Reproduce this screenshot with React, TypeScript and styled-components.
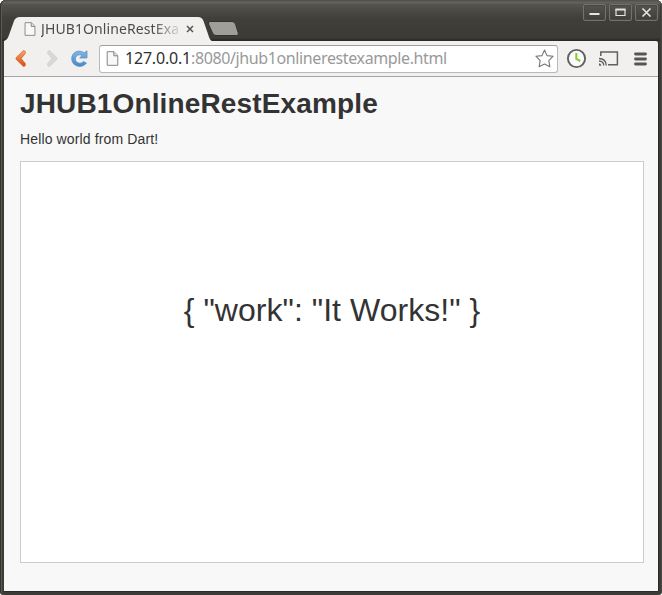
import React from "react";
import styled, { createGlobalStyle } from "styled-components";

const GlobalStyle = createGlobalStyle`
  html, body { margin: 0; padding: 0; background: #fff; }
  body { overflow: hidden; }
  * { box-sizing: border-box; }
`;

const Window = styled.div`
  width: 662px;
  height: 595px;
  display: flex;
  flex-direction: column;
  padding: 0 4px 4px;
  border-radius: 6px 6px 4px 4px;
  background: #3c3b37;
  box-shadow: inset 1px 0 #33322e, inset 2px 0 #5b5a54, inset -1px 0 #4a4944, inset 0 1px #55544f, inset 0 2px #74736c;
  font-family: "Liberation Sans", Arial, sans-serif;
`;

const TitleBar = styled.header`
  height: 41px;
  flex: none;
  display: flex;
  align-items: flex-end;
  margin: 0 -2px;
  padding: 0 2px;
  border-radius: 5px 5px 0 0;
  background: linear-gradient(#504f4a 0, #66655e 3px, #55544d 4px, #403f3a 18px, #3c3b37 38px, #2b2a27 40px);
`;

const Tab = styled.div`
  position: relative;
  width: 208px;
  height: 24px;
  display: flex;
  align-items: center;
  padding-left: 20px;
`;

const TabShape = styled.svg`
  position: absolute;
  inset: 0;
`;

const TabTitle = styled.span`
  position: relative;
  width: 139px;
  margin-left: 5px;
  overflow: hidden;
  white-space: nowrap;
  font: 14px/22px "Noto Sans", sans-serif;
  letter-spacing: 0.1px;
  color: #4c4c4c;
  mask-image: linear-gradient(to right, #000 112px, transparent 142px);
`;

const Glyph = styled.svg`
  position: relative;
  display: block;
  flex: none;
`;

const TabClose = styled(Glyph)`
  margin-left: 6px;
`;

const NewTab = styled.svg`
  display: block;
  margin: 0 0 4px -6px;
`;

const Controls = styled.div`
  display: flex;
  gap: 3px;
  align-self: flex-start;
  margin: 4px 0 0 auto;
`;

const ControlButton = styled.button`
  width: 23px;
  height: 17px;
  padding: 0;
  border: 1px solid #73726c;
  border-radius: 2px;
  background: linear-gradient(#55544f, #3f3e3a);
  box-shadow: inset 0 0 0 1px #494843;
  display: grid;
  place-items: center;
`;

const Toolbar = styled.nav`
  height: 36px;
  flex: none;
  display: flex;
  align-items: center;
  background: #f1f0ef;
  border-bottom: 1px solid #a5a5a5;
  border-top-right-radius: 2px;
  box-shadow: 1px 0 #2b2a27;
`;

const NavButtons = styled.div`
  width: 95px;
  flex: none;
  display: flex;
  align-items: center;
  padding-left: 11px;
`;

const ForwardGlyph = styled(Glyph)`
  margin-left: 21px;
`;

const ReloadGlyph = styled(Glyph)`
  margin-left: 13px;
`;

const AddressBar = styled.div`
  width: 459px;
  height: 28px;
  flex: none;
  display: flex;
  align-items: center;
  padding: 0 3px 0 6px;
  border: 1px solid #b9b9b9;
  border-top-color: #9f9f9f;
  border-radius: 3px;
  background: #fff;
`;

const Url = styled.span`
  flex: 1;
  margin-left: 6px;
  padding-bottom: 2px;
  white-space: nowrap;
  font: 16px/24px "Noto Sans", sans-serif;
  letter-spacing: -0.38px;
  color: #999;
`;

const Host = styled.span`
  color: #303030;
  letter-spacing: -0.2px;
`;

const Actions = styled.div`
  display: flex;
  align-items: center;
  gap: 12px;
  padding-left: 8px;
`;

const MenuGlyph = styled(Glyph)`
  margin-left: 3px;
`;

const Page = styled.main`
  flex: 1;
  padding: 11px 14px 0 16px;
  background: #f8f8f8;
  box-shadow: 1px 0 #2b2a27, 0 1px #2b2a27;
  color: #333;
`;

const Heading = styled.h1`
  margin: 0;
  font-size: 28px;
  line-height: 32px;
  font-weight: bold;
  letter-spacing: 0.14px;
`;

const Greeting = styled.p`
  margin: 11px 0 14px;
  font-size: 14px;
  line-height: 16px;
  letter-spacing: 0.13px;
`;

const Output = styled.section`
  width: 624px;
  height: 402px;
  display: flex;
  justify-content: center;
  padding-top: 130px;
  border: 1px solid #ccc;
  background: #fff;
  font-size: 32px;
  line-height: 36px;
  letter-spacing: 0.04px;
`;

const PageIcon = ({ size = 13 }: { size?: number }) => (
  <Glyph width={size} height={size + 2} viewBox="0 0 12 15">
    <path d="M.7.7h6.800l3.800 3.900v9.700H.7z" fill="#f8f8f8" stroke="#858585" />
    <path d="M7.300.8v4h4" fill="#ddd" stroke="#858585" />
  </Glyph>
);

const CHEVRON = "M8.200.7Q9.500 0 10.200 1.600L10.500 3.200 6.200 8.500 10.500 13.800 10.200 15.400Q9.500 17 8.200 16.300L1.200 9.500Q.5 8.500 1.200 7.500Z";

export default function App() {
  return (
    <>
      <GlobalStyle />
      <Window>
        <TitleBar>
          <Tab>
            <TabShape width="208" height="24" viewBox="0 0 208 24">
              <path d="M0 24C3 23 4 21 5 18L10 4Q11.500 0 16 0H194Q198 0 199.500 4L204 17Q206 24 208 24Z" fill="#f1f0ef" />
            </TabShape>
            <PageIcon size={12} />
            <TabTitle>JHUB1OnlineRestExample</TabTitle>
            <TabClose width="8" height="8" viewBox="0 0 8 8">
              <path d="M1 1l6 6M7 1L1 7" stroke="#555" strokeWidth="1.500" />
            </TabClose>
          </Tab>
          <NewTab width="34" height="16" viewBox="0 0 34 16">
            <path d="M4 .5H26Q28.500.5 29.500 3L32.300 12Q33 14.500 30.500 14.500H10Q7.500 14.500 6.500 12L2.500 3Q2 .5 4 .5Z" fill="#9f9e9b" stroke="#33322e" />
          </NewTab>
          <Controls>
            <ControlButton aria-label="Minimize">
              <svg width="11" height="9"><path d="M.5 6h10" stroke="#e5e4df" strokeWidth="2" /></svg>
            </ControlButton>
            <ControlButton aria-label="Maximize">
              <svg width="11" height="9"><path d="M1 1.500h9v6H1z" fill="none" stroke="#e5e4df" strokeWidth="1.200" /><path d="M.5 1.500h10" stroke="#e5e4df" strokeWidth="2" /></svg>
            </ControlButton>
            <ControlButton aria-label="Close">
              <svg width="11" height="9"><path d="M1.500.5l8 8M9.500.5l-8 8" stroke="#e5e4df" strokeWidth="1.600" /></svg>
            </ControlButton>
          </Controls>
        </TitleBar>
        <Toolbar>
          <NavButtons>
            <Glyph width="11" height="17" viewBox="0 0 11 17">
              <defs>
                <linearGradient id="back" x2="0" y2="1">
                  <stop stopColor="#f2a96c" />
                  <stop offset="1" stopColor="#df4710" />
                </linearGradient>
              </defs>
              <path d={CHEVRON} fill="url(#back)" stroke="#cf571f" strokeWidth=".6" />
            </Glyph>
            <ForwardGlyph width="11" height="17" viewBox="0 0 11 17">
              <path d={CHEVRON} transform="translate(11 0) scale(-1 1)" fill="#d9d8d7" stroke="#c9c8c7" strokeWidth=".6" />
            </ForwardGlyph>
            <ReloadGlyph width="17" height="17" viewBox="0 0 17 17">
              <defs>
                <linearGradient id="reload" x2="0" y2="1">
                  <stop stopColor="#86b6e2" />
                  <stop offset="1" stopColor="#4789ca" />
                </linearGradient>
              </defs>
              <path
                d="M13.300 2.800 16 .8V8H8.700L10.900 5.400C7.800 3.800 4.300 5.800 4.400 9c.1 4.200 5.500 5.600 8 2.400l3.100 1.600C11.300 19 .8 16.800.7 8.800.6 1.600 8.200-.8 13.300 2.800Z"
                fill="url(#reload)"
                stroke="#4f8dc6"
                strokeWidth=".7"
              />
            </ReloadGlyph>
          </NavButtons>
          <AddressBar>
            <PageIcon />
            <Url><Host>127.0.0.1</Host>:8080/jhub1onlinerestexample.html</Url>
            <Glyph width="19" height="19" viewBox="0 0 19 19">
              <path d="M9.500 1l2.500 5.600 6.100.6-4.300 4.400 1.100 6.200-5.400-2.700-5.400 2.700 1.100-6.200L.9 7.200 7 6.600z" fill="#fff" stroke="#777" strokeWidth="1.100" strokeLinejoin="round" />
            </Glyph>
          </AddressBar>
          <Actions>
            <Glyph width="21" height="21" viewBox="0 0 21 21">
              <circle cx="10.500" cy="10.500" r="8.600" fill="#fafafa" stroke="#606060" strokeWidth="1.900" />
              <path d="M10.300 5v5.800l4 2.200" fill="none" stroke="#8cc832" strokeWidth="2" />
            </Glyph>
            <Glyph width="20" height="17" viewBox="0 0 20 17">
              <path d="M1.800 6V1.900H18.400V14.800H9" fill="none" stroke="#606060" strokeWidth="1.500" />
              <path d="M0 8.500q7 .3 7.300 7M0 11q4.600.2 4.800 4.500" fill="none" stroke="#606060" strokeWidth="1.300" />
              <path d="M0 13.200q2.200.2 2.400 2.500H0z" fill="#606060" />
            </Glyph>
            <MenuGlyph width="13" height="14" viewBox="0 0 13 14">
              <path d="M1.500 2h10M1.500 7h10M1.500 12h10" stroke="#555" strokeWidth="2.800" strokeLinecap="round" />
            </MenuGlyph>
          </Actions>
        </Toolbar>
        <Page>
          <Heading>JHUB1OnlineRestExample</Heading>
          <Greeting>Hello world from Dart!</Greeting>
          <Output>{'{ "work": "It Works!" }'}</Output>
        </Page>
      </Window>
    </>
  );
}
